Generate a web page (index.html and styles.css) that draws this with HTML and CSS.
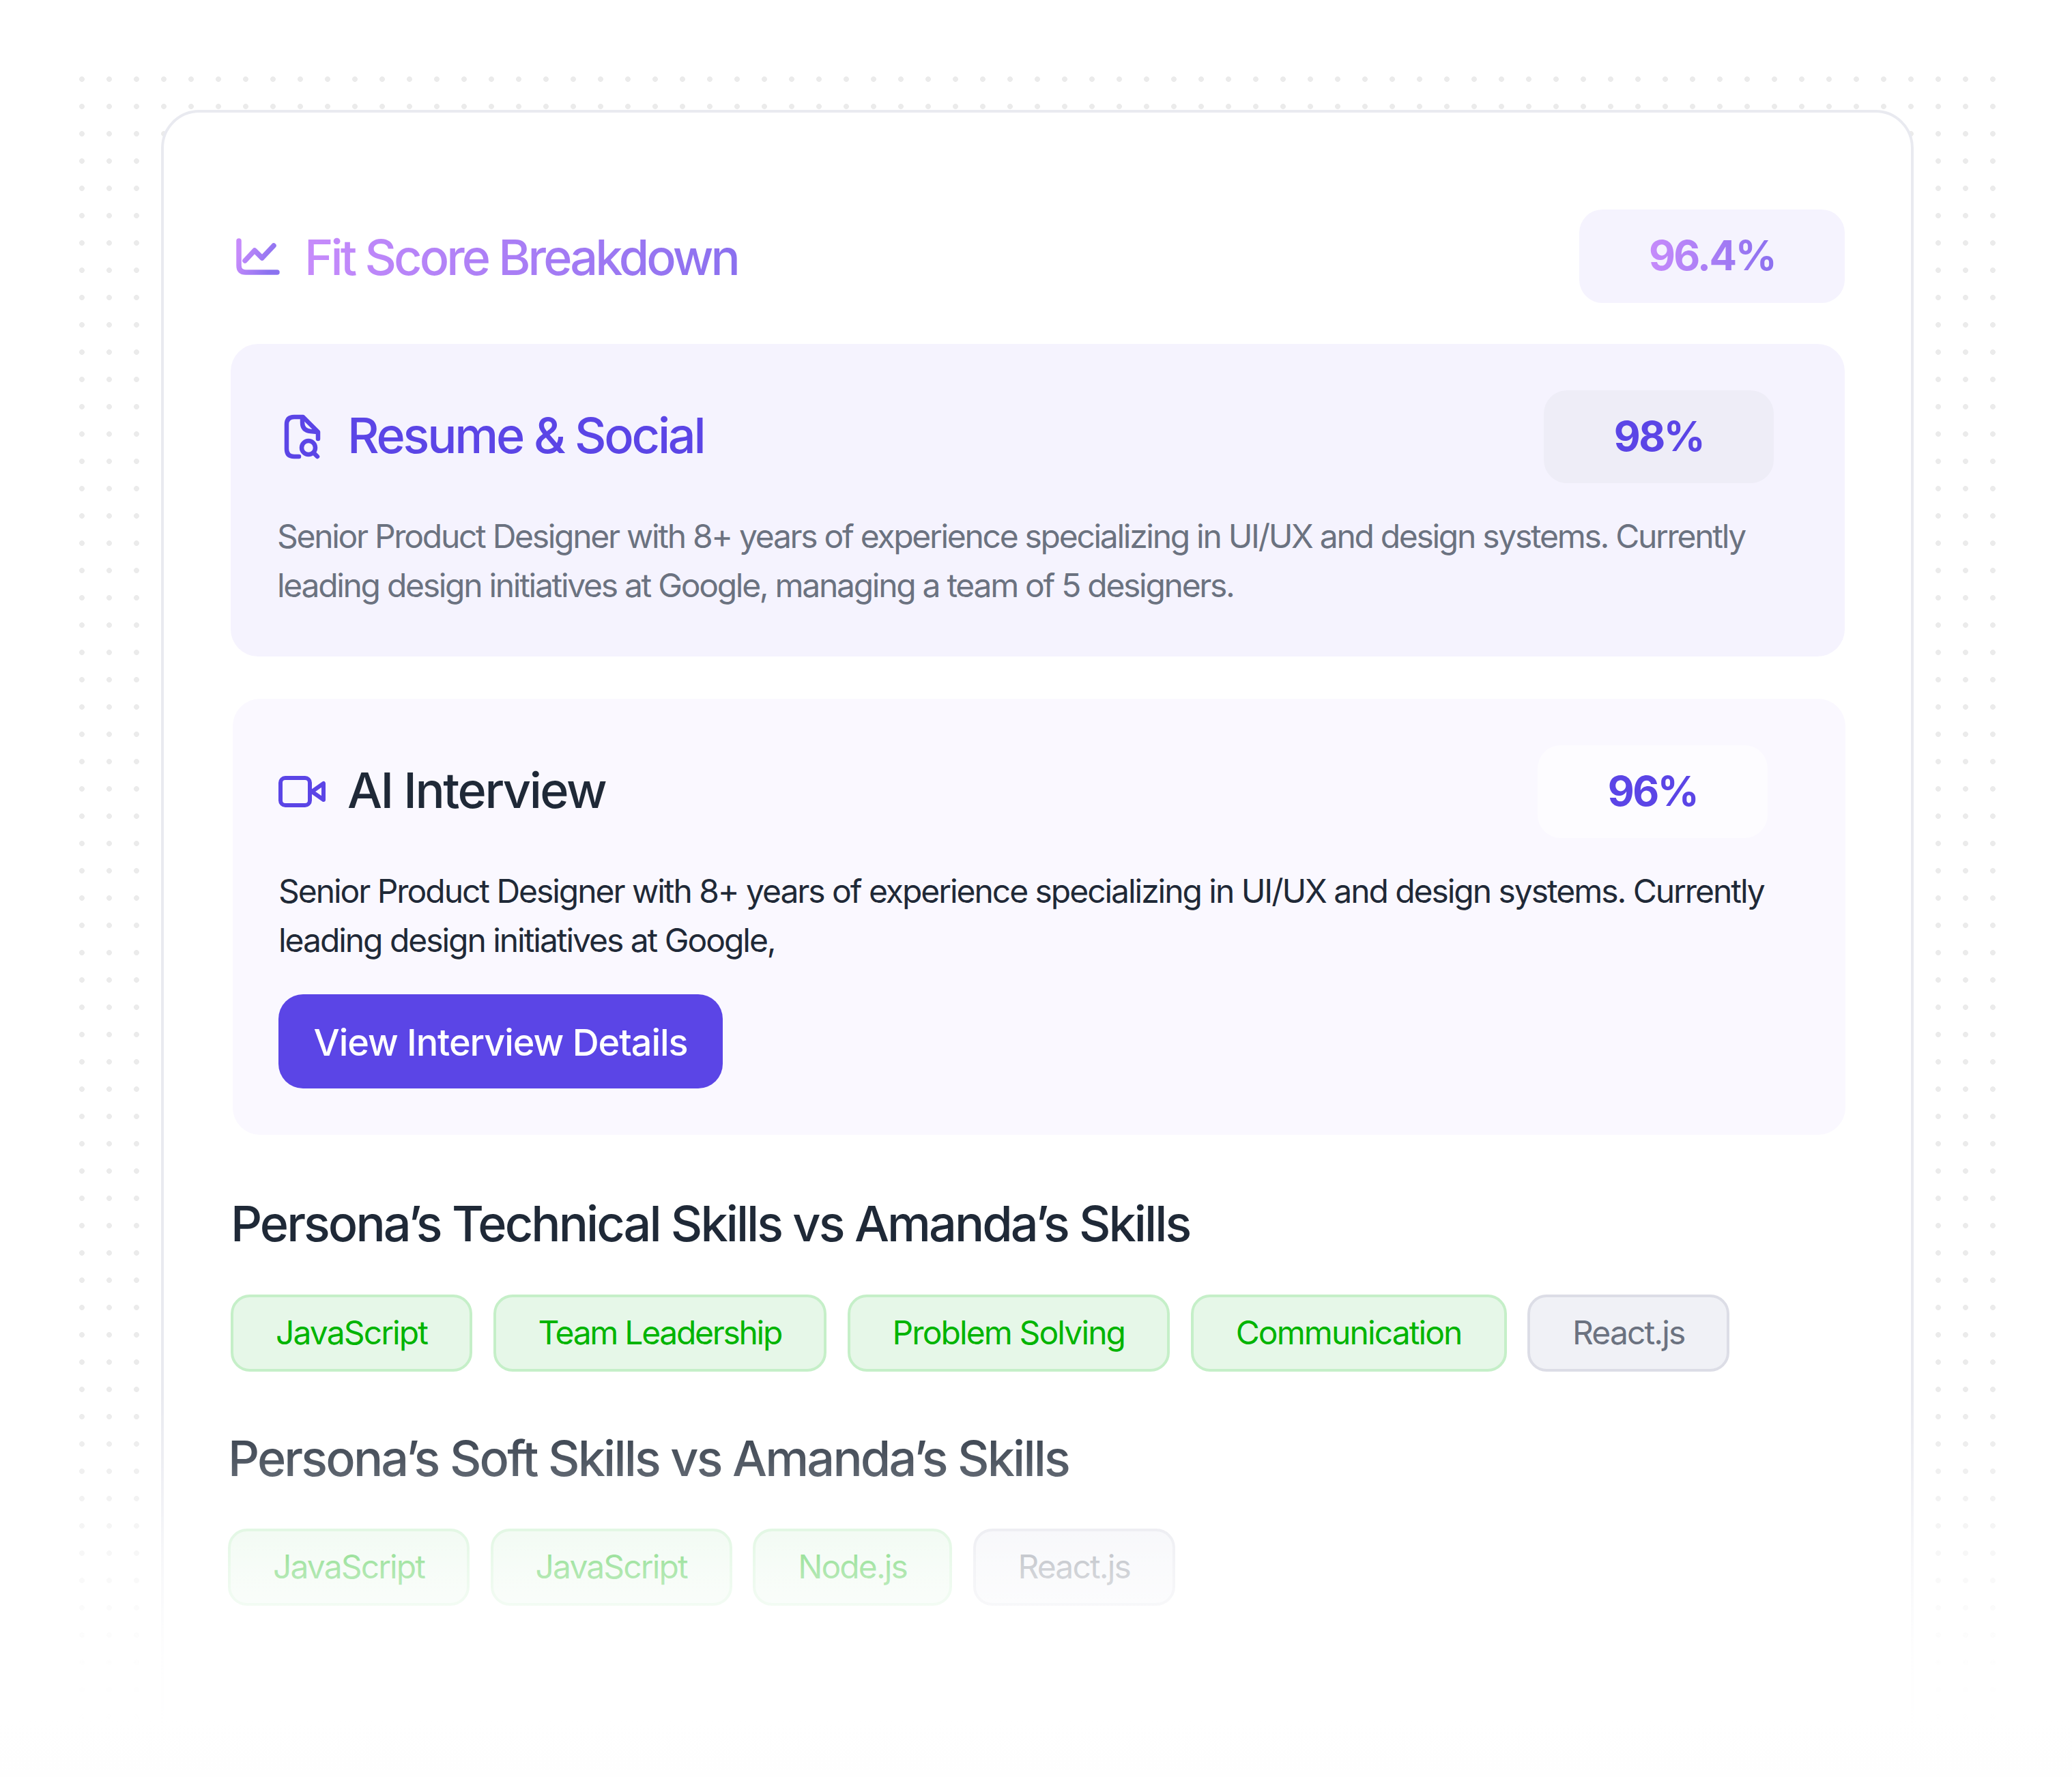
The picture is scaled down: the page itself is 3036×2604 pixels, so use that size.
FILE: index.html
```html
<!DOCTYPE html>
<html lang="en">
<head>
    <meta charset="UTF-8">
    <meta name="viewport" content="width=device-width, initial-scale=1.0">
    <title>Fit Score Breakdown</title>
    <link rel="stylesheet" href="styles.css">
</head>
<body>

    <div class="stage">
        <div class="panel">

            <div class="score-head">
                <div class="title-group">
                    <svg class="icon-chart" viewBox="0 0 70 60" fill="none" stroke="url(#fit)" stroke-width="7.5" stroke-linecap="round" stroke-linejoin="round">
                        <defs>
                            <linearGradient id="fit" gradientUnits="userSpaceOnUse" x1="20" y1="0" x2="66" y2="20">
                                <stop offset="0" stop-color="#c68bfb"/>
                                <stop offset="1" stop-color="#8b72f0"/>
                            </linearGradient>
                        </defs>
                        <path d="M9 6V42Q9 52 19 52H65"/>
                        <path d="M18 35L32 20L43 31L60 13"/>
                    </svg>
                    <h1 class="fit-title">Fit Score Breakdown</h1>
                </div>
                <div class="pill pill-total"><span class="fit-value">96.4%</span></div>
            </div>

            <section class="box box-resume">
                <div class="box-head">
                    <div class="title-group">
                        <svg class="icon-resume" viewBox="6 14 65 70" fill="none" stroke="#5b45e6" stroke-width="6.5" stroke-linecap="round" stroke-linejoin="round">
                            <path d="M38 78H31Q20 78 20 67V31Q20 20 31 20H44L66 42V52"/>
                            <path d="M43 21V28Q43 40 55 41L65 42"/>
                            <circle cx="52" cy="65" r="10"/>
                            <path d="M60 73L65 78"/>
                        </svg>
                        <h2 class="box-title">Resume &amp; Social</h2>
                    </div>
                    <div class="pill pill-resume">98%</div>
                </div>
                <p class="box-text">Senior Product Designer with 8+ years of experience specializing in UI/UX and design systems. Currently leading design initiatives at Google, managing a team of 5 designers.</p>
            </section>

            <section class="box box-interview">
                <div class="box-head">
                    <div class="title-group">
                        <svg class="icon-video" viewBox="13 5 69 70" fill="none" stroke="#5b45e6" stroke-width="6" stroke-linecap="round" stroke-linejoin="round">
                            <rect x="16" y="20" width="43" height="40" rx="7"/>
                            <path d="M62 40L79 28V52Z"/>
                        </svg>
                        <h2 class="box-title">AI Interview</h2>
                    </div>
                    <div class="pill pill-interview">96%</div>
                </div>
                <p class="box-text">Senior Product Designer with 8+ years of experience specializing in UI/UX and design systems. Currently leading design initiatives at Google,</p>
                <button class="btn-details">View Interview Details</button>
            </section>

            <h3 class="skills-title">Persona’s Technical Skills vs Amanda’s Skills</h3>
            <div class="tags">
                <span class="tag match">JavaScript</span>
                <span class="tag match tag-tight">Team Leadership</span>
                <span class="tag match">Problem Solving</span>
                <span class="tag match">Communication</span>
                <span class="tag miss">React.js</span>
            </div>

            <div class="soft">
                <h3 class="skills-title">Persona’s Soft Skills vs Amanda’s Skills</h3>
                <div class="tags">
                    <span class="tag match">JavaScript</span>
                    <span class="tag match">JavaScript</span>
                    <span class="tag match">Node.js</span>
                    <span class="tag miss">React.js</span>
                </div>
            </div>

        </div>
    </div>

    <div class="fade"></div>

</body>
</html>
```

FILE: styles.css
```css
* {
    margin: 0;
    padding: 0;
    box-sizing: border-box;
}

html, body {
    height: 2604px;
    overflow: hidden;
}

body {
    font-family: 'Inter', 'Liberation Sans', sans-serif;
    background-color: #ffffff;
    color: #1f2937;
    position: relative;
}

/* Dotted backdrop */
.stage {
    margin: 112px 112px 0 116px;
    height: 2492px;
    padding: 49px 0 0 120px;
    background-image: radial-gradient(circle at 4px 4px, #ebebeb 3.6px, transparent 4.2px);
    background-size: 40px 40px;
}

.panel {
    width: 2568px;
    height: 2500px;
    padding: 142px 97px 0 98px;
    background-color: #ffffff;
    border: 4px solid #e9eaf0;
    border-radius: 56px;
}

.score-head,
.box-head {
    display: flex;
    justify-content: space-between;
    align-items: center;
}

.title-group {
    display: flex;
    align-items: center;
}

.score-head {
    margin-bottom: 60px;
}

.score-head .title-group {
    padding-top: 2px;
}

/* Heading with gradient */
.icon-chart {
    width: 70px;
    height: 60px;
    margin-left: 3px;
}

.fit-title {
    margin-left: 35px;
    font-size: 72px;
    line-height: 88px;
    font-weight: 500;
    letter-spacing: -3.95px;
    background: linear-gradient(90deg, #c68bfb, #8b70ef);
    -webkit-background-clip: text;
    background-clip: text;
    color: transparent;
}

.fit-value {
    background: linear-gradient(90deg, #c68bfb, #8b70ef);
    -webkit-background-clip: text;
    background-clip: text;
    color: transparent;
}

.pill {
    display: flex;
    justify-content: center;
    align-items: center;
    width: 337px;
    height: 136px;
    padding-bottom: 3px;
    border-radius: 34px;
    font-size: 60px;
    font-weight: 700;
    letter-spacing: -2.5px;
    color: #5b45e6;
}

.pill-total {
    width: 389px;
    height: 137px;
    background-color: #f5f3fe;
}

.pill-resume {
    background-color: #eeedf7;
}

.pill-interview {
    background-color: #fdfcff;
}

/* Cards */
.box {
    border-radius: 40px;
    padding: 68px 104px 68px 68px;
}

.box-resume {
    background-color: #f5f3fe;
    margin-bottom: 62px;
}

.box-interview {
    background-color: #faf8ff;
    margin-left: 3px;
    margin-right: -1px;
    padding-right: 114px;
    padding-left: 67px;
}

.box-title {
    padding-bottom: 4px;
    font-size: 72px;
    line-height: 88px;
    font-weight: 500;
    letter-spacing: -3.2px;
}

.box-interview .box-title {
    letter-spacing: -2.5px;
}

.icon-resume {
    width: 65px;
    height: 70px;
    margin-right: 38px;
}

.icon-video {
    width: 69px;
    height: 70px;
    margin-right: 32px;
}

.box-resume .box-title {
    color: #5b45e6;
}

.box-text {
    margin-top: 42px;
    font-size: 48px;
    line-height: 72px;
    letter-spacing: -2.05px;
}

.box-resume .box-text {
    color: #6b7280;
    letter-spacing: -2.3px;
}

.btn-details {
    display: block;
    margin-top: 43px;
    width: 651px;
    height: 138px;
    padding-top: 2px;
    border: none;
    border-radius: 36px;
    background-color: #5b45e6;
    color: #ffffff;
    font-family: inherit;
    font-size: 54px;
    font-weight: 500;
    letter-spacing: -1.05px;
}

/* Skill groups */
.skills-title {
    margin-top: 86px;
    font-size: 72px;
    line-height: 88px;
    font-weight: 500;
    letter-spacing: -2.95px;
}

.tags {
    display: flex;
    gap: 30.5px;
    margin-top: 60px;
}

.tag {
    display: flex;
    align-items: center;
    height: 113px;
    padding: 0 62px 3px;
    border: 4px solid;
    border-radius: 28px;
    font-size: 48px;
    letter-spacing: -1.9px;
    white-space: nowrap;
}

.tag-tight {
    letter-spacing: -2.3px;
}

.tag.match {
    background-color: #e6f7e8;
    border-color: #c5efc8;
    color: #00b400;
}

.tag.miss {
    background-color: #f0f1f6;
    border-color: #dcdde6;
    color: #6b7280;
}

.soft {
    margin-left: -4px;
}

.soft .skills-title {
    margin-top: 83px;
    letter-spacing: -2.85px;
}

.soft .tags {
    margin-top: 59px;
}

/* Lower part of the page dissolves into white */
.fade {
    position: absolute;
    left: 0;
    right: 0;
    top: 2040px;
    bottom: 0;
    pointer-events: none;
    background: linear-gradient(180deg,
        rgba(255, 255, 255, 0) 0,
        rgba(255, 255, 255, 0.22) 100px,
        rgba(255, 255, 255, 0.68) 260px,
        rgba(255, 255, 255, 0.93) 380px,
        rgba(255, 255, 255, 0.985) 480px,
        #fefefe 560px);
}
```
